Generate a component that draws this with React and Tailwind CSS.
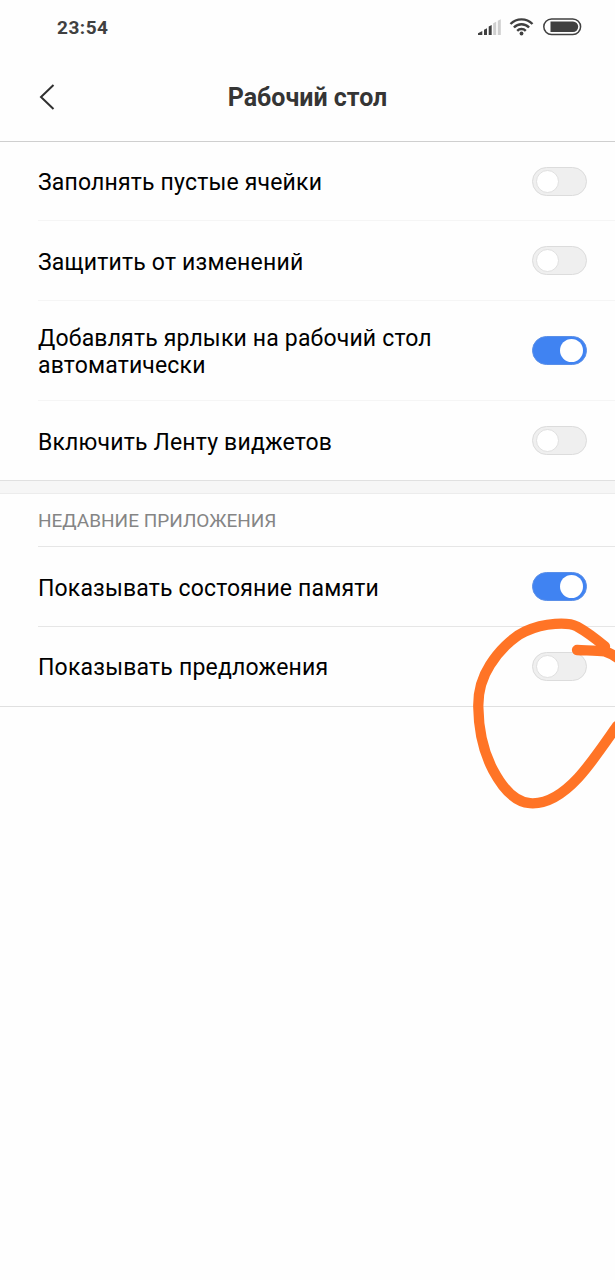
import { useState } from "react";

const desktopItems = [
  { id: "fill", label: "Заполнять пустые ячейки", on: false, row: "h-[79px] border-b border-[#f5f5f5]", text: "pt-[3px] tracking-[0.18px]" },
  { id: "lock", label: "Защитить от изменений", on: false, row: "h-20 border-b border-[#f5f5f5]", text: "pt-[3px] tracking-[0.2px]" },
  { id: "shortcuts", label: "Добавлять ярлыки на рабочий стол автоматически", on: true, row: "h-[100px] border-b border-[#f5f5f5]", text: "pt-[3px] tracking-[0.17px]" },
  { id: "widgets", label: "Включить Ленту виджетов", on: false, row: "h-[79px]", text: "pt-[3px] tracking-[0.18px]" },
];

const recentItems = [
  { id: "memory", label: "Показывать состояние памяти", on: true, row: "h-20 border-b border-[#e6e6e6]", text: "pt-[3px] tracking-[0.16px]" },
  { id: "suggest", label: "Показывать предложения", on: false, row: "h-[79px]", text: "pt-[2px] tracking-[0.2px]" },
];

function StatusIcons() {
  return (
    <svg width="110" height="20" viewBox="-2 0 110 20" fill="none">
      {/* Signal */}
      <path d="M-1 18v-1.800L3.300 14V18zM5 18v-5.200l3-1.500V18zM9.700 18V9.500l3-1.500V18z" fill="#404040" />
      <path d="M14.200 18V6.200l3-1.500V18zM18.800 18V3.800l3-1.500V18z" fill="#cfcfcf" />
      {/* Wi-Fi */}
      <g stroke="#404040" strokeWidth="2.4">
        <path d="M31.500 7a15.500 15.500 0 0 1 22 0" />
        <path d="M34.900 10.500a10.600 10.600 0 0 1 15.200 0" />
        <path d="M38.200 13.800a6 6 0 0 1 8.600 0" />
      </g>
      <circle cx="42.500" cy="16.500" r="1.900" fill="#404040" />
      {/* Battery */}
      <rect x="64.800" y="2" width="36.800" height="15.600" rx="7.800" stroke="#404040" strokeWidth="1.500" />
      <path d="M71.500 4.600h22.500a5.200 5.200 0 0 1 0 10.400H71.500z" fill="#404040" />
    </svg>
  );
}

function Toggle({ on, onClick }) {
  return (
    <button
      onClick={onClick}
      className={
        on
          ? "flex h-[29px] w-[55px] shrink-0 items-center justify-end rounded-full border border-[#5a8fe8] bg-[#4083f2] pr-[3px]"
          : "flex h-[29px] w-[55px] shrink-0 items-center rounded-full border border-[#dcdcdc] bg-[#efefef] pl-[3px]"
      }
    >
      <span
        className={
          on
            ? "size-[23px] rounded-full bg-white"
            : "size-[23px] rounded-full border border-[#e0e0e0] bg-white"
        }
      />
    </button>
  );
}

function SettingRow({ item, on, onToggle }) {
  return (
    <div className={`ml-[38px] flex items-center justify-between pr-7 ${item.row}`}>
      <span className={`w-[420px] text-[23px] leading-[27px] text-black ${item.text}`}>
        {item.label}
      </span>
      <Toggle on={on} onClick={onToggle} />
    </div>
  );
}

function App() {
  const [values, setValues] = useState(() =>
    Object.fromEntries([...desktopItems, ...recentItems].map((i) => [i.id, i.on]))
  );

  const toggle = (id) => setValues((prev) => ({ ...prev, [id]: !prev[id] }));

  return (
    <div className="relative h-[1280px] w-[615px] overflow-hidden bg-[#fefefe] font-['Roboto',sans-serif]">
      {/* Status bar */}
      <div className="flex h-[54px] items-center justify-between pr-7 pl-[57px]">
        <span className="pt-[2px] text-[19px] font-bold tracking-[0.5px] text-[#404040]">23:54</span>
        <StatusIcons />
      </div>

      {/* Header */}
      <div className="grid h-22 grid-cols-[60px_1fr_60px] items-center border-b border-[#cfcfcf]">
        <button className="pb-[2px] pl-[38px]">
          <svg width="18" height="26" viewBox="0 0 18 26" fill="none" stroke="#303030" strokeWidth="2">
            <path d="M15.500 1L3 13l12.500 12" />
          </svg>
        </button>
        <h1 className="text-center text-[25px] font-bold text-[#353535]">Рабочий стол</h1>
      </div>

      {/* Desktop settings */}
      {desktopItems.map((item) => (
        <SettingRow key={item.id} item={item} on={values[item.id]} onToggle={() => toggle(item.id)} />
      ))}

      <div className="h-[14px] border-t border-b border-t-[#e0e0e0] border-b-[#ececec] bg-[#f6f6f6]" />

      {/* Recent apps */}
      <div className="ml-[38px] flex h-[53px] items-center border-b border-[#e6e6e6]">
        <h2 className="pt-[3px] text-[19px] text-[#858585]">НЕДАВНИЕ ПРИЛОЖЕНИЯ</h2>
      </div>
      {recentItems.map((item) => (
        <SettingRow key={item.id} item={item} on={values[item.id]} onToggle={() => toggle(item.id)} />
      ))}
      <div className="border-t border-[#e0e0e0]" />

      {/* Marker drawn over the last row */}
      <svg
        className="pointer-events-none absolute top-[610px] left-[465px]"
        width="150"
        height="205"
        viewBox="0 0 150 205"
        fill="none"
        stroke="#ff7426"
        strokeWidth="10.300"
        strokeLinecap="round"
        strokeLinejoin="round"
      >
        <path d="M140 36.500C131 29 121 21.500 112 16.500C103 12 80 12.500 60 21.500C47 27.500 33 42 25 55C16 69 13 83 13.300 97C13.600 119 18 141 28 160C37 177 49 192 65 193.200C82 194.500 99 183 113 168C126 154 140 133 152 116" />
        <path d="M112 40C122 40.500 132 40 140 41.500C145 43 150 46 154 49" />
      </svg>
    </div>
  );
}

export default App;
